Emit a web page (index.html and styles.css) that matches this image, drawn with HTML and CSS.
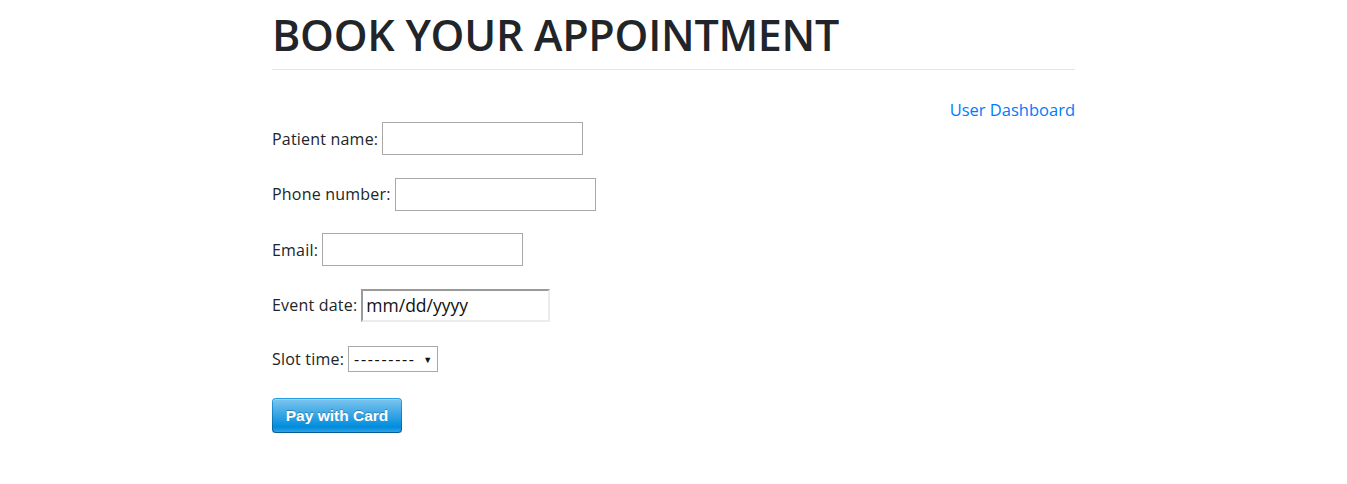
FILE: index.html
```html
<!DOCTYPE html>
<html>
<head>
<meta charset="utf-8">
<link rel="stylesheet" href="styles.css">
</head>
<body>
<main class="page">
  <h1 class="title">BOOK YOUR APPOINTMENT</h1>
  <div class="toplink"><a href="#">User Dashboard</a></div>
  <form class="form">
    <div class="row"><label>Patient name:</label><input class="field" type="text"></div>
    <div class="row"><label>Phone number:</label><input class="field" type="text"></div>
    <div class="row"><label>Email:</label><input class="field" type="text"></div>
    <div class="row"><label>Event date:</label><div class="date">mm/dd/yyyy</div></div>
    <div class="row row-slot"><label>Slot time:</label><div class="select"><span class="dashes">---------</span><span class="caret">&#9660;</span></div></div>
    <div class="row row-pay"><button type="button" class="pay"><span>Pay with Card</span></button></div>
  </form>
</main>
</body>
</html>
```
FILE: styles.css
```css
html, body { margin: 0; padding: 0; background: #fff; }
body {
  font-family: "Open Sans", "Noto Sans", sans-serif;
  font-size: 16px;
  color: #212529;
}
.page {
  width: 803px;
  margin: 0 auto;
}
.title {
  margin: 0;
  padding-top: 10px;
  padding-bottom: 9px;
  font-size: 43px;
  font-weight: 600;
  line-height: 50px;
  letter-spacing: -0.25px;
  border-bottom: 1px solid #e5e5e5;
}
.toplink {
  display: flex;
  justify-content: flex-end;
  margin-top: 28px;
  line-height: 24px;
}
.toplink a { color: #007bff; text-decoration: none; font-size: 16.5px; }
.form {
  display: flex;
  flex-direction: column;
  gap: 22.5px;
  margin-top: 0;
}
.row {
  display: flex;
  align-items: center;
  gap: 4px;
  font-size: 16px;
}
.row label { letter-spacing: 0.2px; line-height: 24px; }
.row-slot { margin-top: 2px; }
.row-pay { margin-top: 3.5px; }
.field {
  width: 201px;
  height: 33px;
  box-sizing: border-box;
  border: 1px solid #a9a9a9;
  margin: 0;
  padding: 1px 2px;
  font: inherit;
}
.date {
  width: 189px;
  height: 33px;
  box-sizing: border-box;
  border-style: solid;
  border-width: 2px;
  border-color: #9a9a9a #ececec #ececec #9a9a9a;
  padding: 0 3px;
  font-size: 17.5px;
  line-height: 29px;
  color: #111;
}
.select {
  width: 90px;
  height: 26px;
  box-sizing: border-box;
  border: 1px solid #a9a9a9;
  display: flex;
  align-items: center;
  justify-content: space-between;
  padding: 0 5px 0 5px;
  color: #111;
}
.dashes { font-size: 16px; letter-spacing: 1.7px; line-height: 22px; }
.caret { font-size: 9px; color: #111; }
.pay {
  width: 130px;
  height: 35px;
  padding: 1px;
  border: 0;
  border-radius: 4px;
  background: linear-gradient(#28a0e5, #015e94);
  box-shadow: 0 1px 0 rgba(0,0,0,0.2);
  cursor: pointer;
}
.pay span {
  display: block;
  height: 100%;
  border-radius: 3px;
  background: linear-gradient(#7dc5ee, #008cdd 85%, #30a2e4);
  box-shadow: inset 0 1px 0 rgba(255,255,255,0.25);
  color: #fff;
  font-family: "Liberation Sans", Arial, sans-serif;
  font-weight: bold;
  font-size: 15.5px;
  line-height: 33px;
  text-shadow: 0 -1px 0 rgba(0,0,0,0.25);
}
```
